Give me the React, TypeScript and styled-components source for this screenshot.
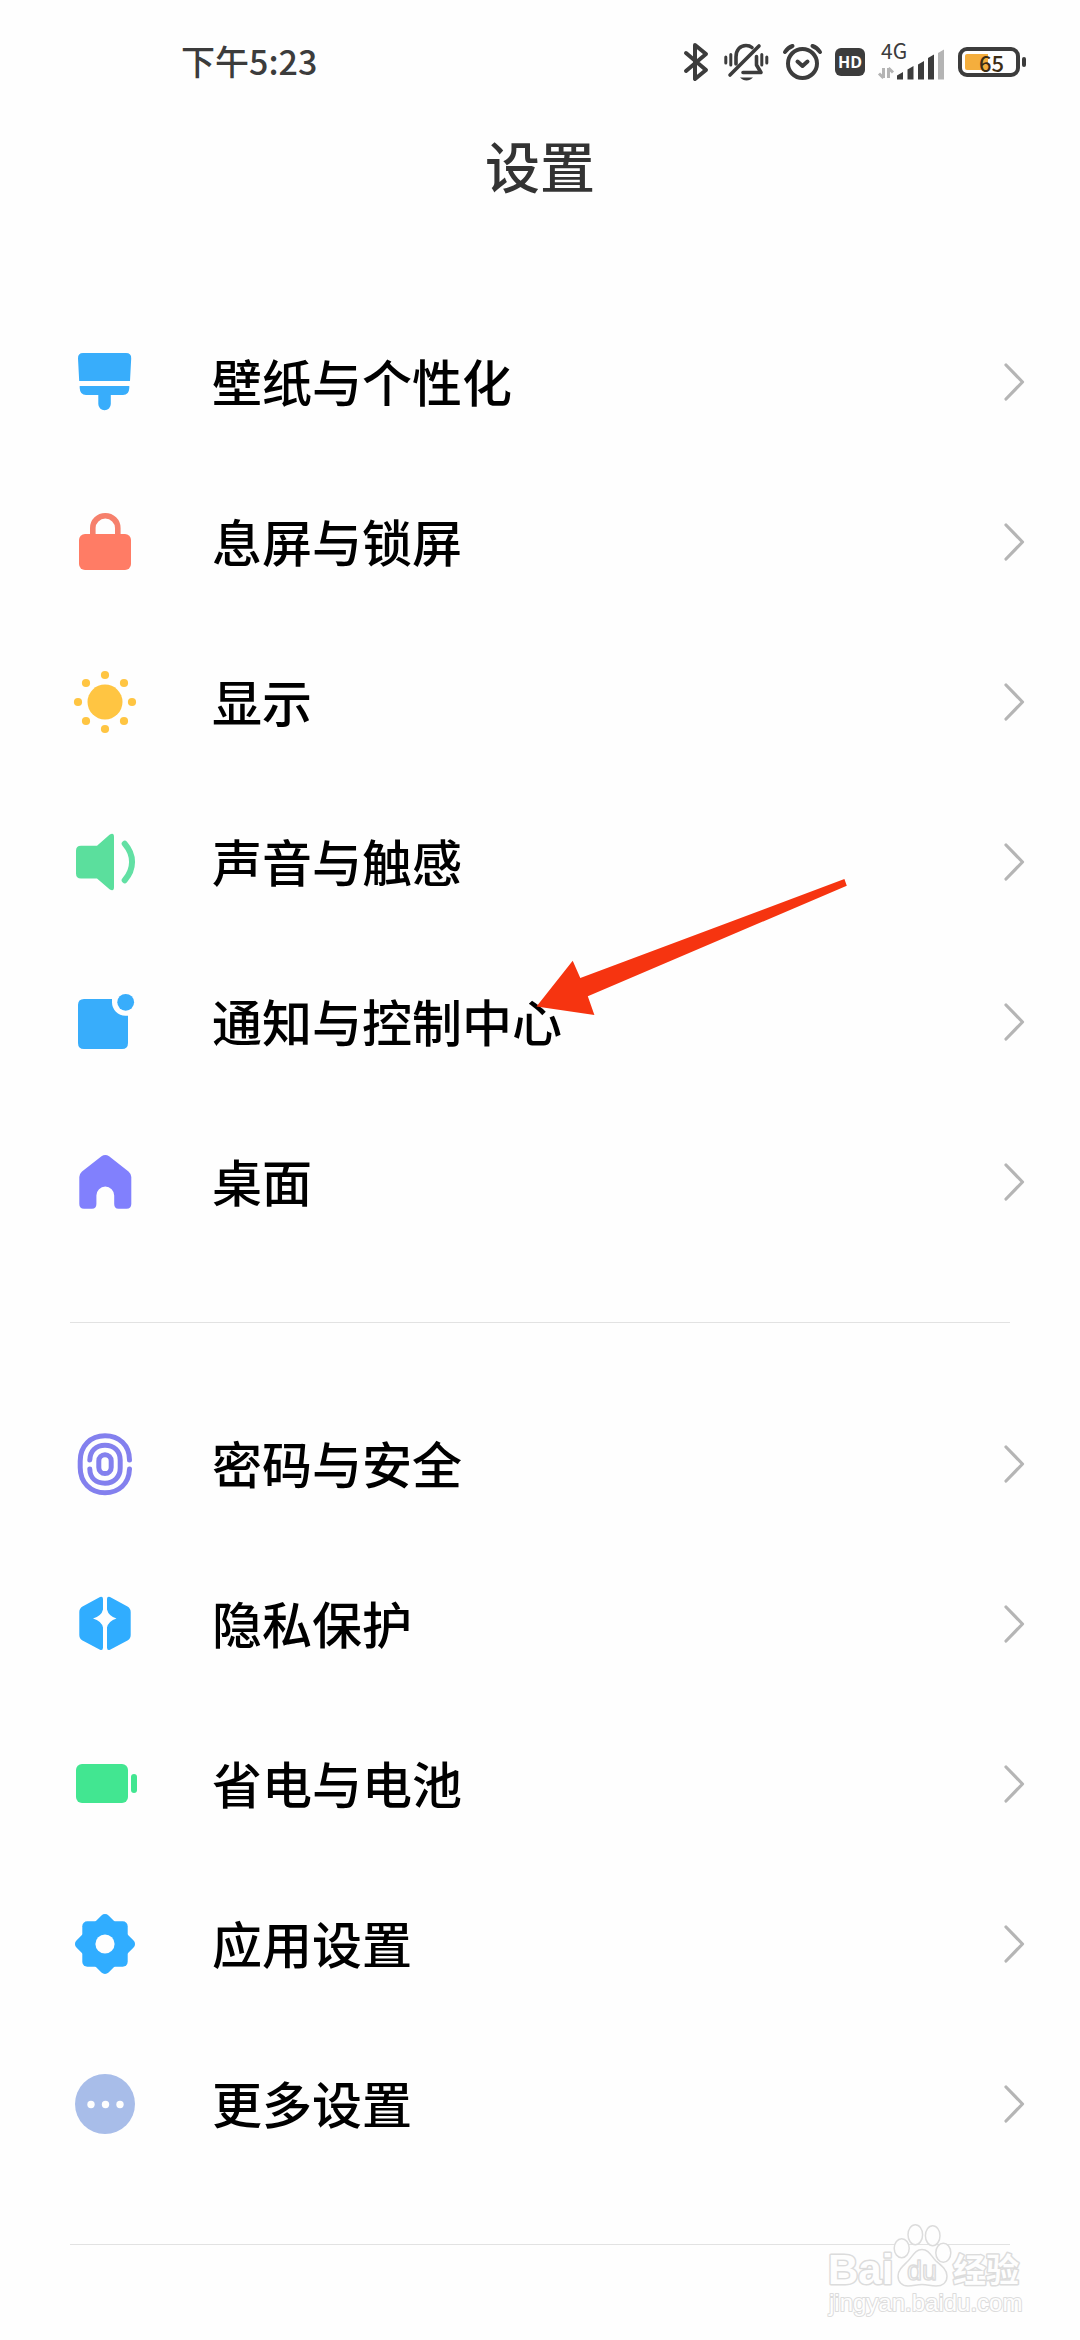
import React from 'react';
import styled, { createGlobalStyle } from 'styled-components';

const GlobalStyle = createGlobalStyle`
  *, *::before, *::after { box-sizing: border-box; }
  body {
    margin: 0;
    background: #fefefe;
    font-family: "Noto Sans CJK SC", "Noto Sans", sans-serif;
  }
`;

const Page = styled.div`
  position: relative;
  min-height: 100vh;
  padding-bottom: 95px;
  background: #fefefe;
  overflow: hidden;
`;

const StatusBar = styled.div`
  display: flex;
  align-items: center;
  justify-content: space-between;
  height: 124px;
  padding: 0 54px 0 181px;
  color: #3c3c3c;
`;

const Clock = styled.time`
  padding-bottom: 2px;
  font-size: 34px;
  line-height: 40px;
  font-weight: 500;
`;

const StatusIcons = styled.div`
  display: flex;
  align-items: center;
  gap: 13px;
`;

const Glyph = styled.svg`
  display: block;
  flex: none;
  overflow: visible;
`;

const HdBadge = styled.span`
  display: flex;
  align-items: center;
  justify-content: center;
  width: 30px;
  height: 28px;
  border-radius: 6px;
  background: #3c3c3c;
  color: #fefefe;
  font: 700 16px/28px "Open Sans", "Noto Sans", sans-serif;
`;

const Battery = styled.span`
  display: flex;
  align-items: center;
  gap: 2px;
`;

const BatteryCell = styled.span<{ $level: number }>`
  display: flex;
  align-items: center;
  justify-content: flex-end;
  width: 62px;
  height: 30px;
  padding: 3px;
  padding-right: 12px;
  border: 4px solid #3c3c3c;
  border-radius: 9px;
  background: linear-gradient(#f4ae3d, #f4ae3d) content-box no-repeat;
  background-size: ${(p) => p.$level}% 100%;
  font: 500 22px/14px "Noto Sans CJK SC", sans-serif;
  color: #3c2c14;
`;

const BatteryTip = styled.span`
  width: 4px;
  height: 10px;
  border-radius: 2px;
  background: #3c3c3c;
`;

const Title = styled.h1`
  margin: 0;
  text-align: center;
  font-size: 55px;
  line-height: 80px;
  font-weight: 500;
  color: #333;
`;

const Main = styled.main`
  padding-top: 37px;
`;

const Section = styled.ul`
  position: relative;
  list-style: none;
  margin: 0;
  padding: 61px 0 60px;
`;

const Divider = styled.hr`
  height: 1px;
  margin: 0 70px;
  border: 0;
  background: #e2e2e2;
`;

const Item = styled.li`
  position: relative;
`;

const Row = styled.a`
  display: flex;
  align-items: center;
  gap: 72px;
  height: 160px;
  padding: 0 56px 0 70px;
  color: #000;
  text-decoration: none;
`;

const Label = styled.span`
  flex: 1;
  padding-bottom: 4px;
  font-size: 50px;
  line-height: 72px;
  font-weight: 500;
`;

const Pointer = styled.svg`
  position: absolute;
  left: 536px;
  top: -64px;
  overflow: visible;
  pointer-events: none;
`;

const Watermark = styled.svg`
  position: absolute;
  right: 56px;
  bottom: 20px;
  overflow: visible;
  pointer-events: none;
`;

const Bluetooth = () => (
  <Glyph width="27" height="38" viewBox="0 0 27 38" fill="none" stroke="#3c3c3c" strokeWidth="4" strokeLinecap="round" strokeLinejoin="round">
    <path d="M2 10 L22 27 L11 36 V2 L22 11 L2 28" />
  </Glyph>
);

const MutedBell = () => (
  <Glyph width="46" height="38" viewBox="0 0 46 38" fill="none" stroke="#3c3c3c" strokeWidth="3.6" strokeLinecap="round" strokeLinejoin="round">
    <path d="M35 3 L6 32" />
    <path d="M12 21 V14 C12 7 16 2.500 22 2.500 C24.500 2.500 26.500 3.200 28 4.500" />
    <path d="M32.500 13.500 V22 L37 29.500 H19" />
    <path d="M16 34.500 H29 C27 36.500 25 37.500 22.500 37.500 C20 37.500 18 36.500 16 34.500 Z" fill="#3c3c3c" stroke="none" />
    <path d="M1.800 14 V20 M6.800 11.500 V22 M37.800 11.500 V22 M42.800 14 V20" strokeWidth="3" />
  </Glyph>
);

const Alarm = () => (
  <Glyph width="39" height="36" viewBox="0 0 39 36" fill="none" stroke="#3c3c3c" strokeWidth="4" strokeLinecap="round" strokeLinejoin="round">
    <circle cx="19.500" cy="19.500" r="14.500" />
    <path d="M2 8 C4 5 6.500 3 9.500 2 M37 8 C35 5 32.500 3 29.500 2" />
    <path d="M14.500 17.500 L19.500 22 L24.500 17.500" />
  </Glyph>
);

const Signal = () => (
  <Glyph width="67" height="36" viewBox="0 0 67 36" role="img" aria-label="4G">
    <text x="3" y="15" fontFamily="'Noto Sans CJK SC', sans-serif" fontSize="21" fontWeight="400" fill="#3c3c3c">4G</text>
    <path d="M5.500 24 V34 M5.500 34 L1 29.500 M10.500 34 V24 M10.500 24 L15 28.500" fill="none" stroke="#b4b4b4" strokeWidth="3" />
    <g fill="#3c3c3c">
      <path d="M19 35.500 V31.500 L25 28 V35.500 Z" />
      <path d="M29.500 35.500 V25.500 L35.500 22 V35.500 Z" />
      <path d="M40 35.500 V20.500 L46 17 V35.500 Z" />
      <path d="M50 35.500 V14 L56 10.500 V35.500 Z" />
    </g>
    <path d="M60 35.500 V9 L66 5.500 V35.500 Z" fill="#b4b4b4" />
  </Glyph>
);

const ItemIcon = ({ children }: { children: React.ReactNode }) => (
  <Glyph width="70" height="70" viewBox="0 0 70 70" aria-hidden="true">{children}</Glyph>
);

const Chevron = () => (
  <Glyph width="20" height="38" viewBox="0 0 20 38" fill="none" stroke="#b5b5b5" strokeWidth="3.2" strokeLinecap="round" strokeLinejoin="round" aria-hidden="true">
    <path d="M2 2 L18.500 19 L2 36" />
  </Glyph>
);

const icons = {
  brush: (
    <ItemIcon>
      <g fill="#38adfb">
        <path d="M13 6 H56 Q61.500 6 61.200 11.500 L60 34 H9.200 L8 11.500 Q7.800 6 13 6 Z" />
        <path d="M9.700 39 H59.300 V41 Q59 48 53 48 H40.800 V57 A6.200 6.200 0 0 1 28.300 57 V48 H16 Q10 48 9.700 41 Z" />
      </g>
    </ItemIcon>
  ),
  lock: (
    <ItemIcon>
      <path d="M22.800 30 V21 A12.500 12.200 0 0 1 47.800 21 V30" fill="none" stroke="#f6806c" strokeWidth="5.6" />
      <rect x="9" y="27" width="52" height="36" rx="6" fill="#ff7c65" />
    </ItemIcon>
  ),
  sun: (
    <ItemIcon>
      <g fill="#ffc542">
        <circle cx="35" cy="35" r="17.500" />
        {[[35, 8], [54, 16], [62, 35], [54, 54], [35, 62], [16, 54], [8, 35], [16, 16]].map(([x, y]) => (
          <circle key={`${x}-${y}`} cx={x} cy={y} r="4.100" />
        ))}
      </g>
    </ItemIcon>
  ),
  sound: (
    <ItemIcon>
      <path d="M11 18.700 H27 L39.500 7.800 Q44 5 44 10 V60 Q44 65 39.500 62.200 L27 51.500 H11 Q6 51.500 6 46.500 V23.700 Q6 18.700 11 18.700 Z" fill="#5bdf9d" />
      <path d="M54.700 16.800 C64.500 28 64.500 42 54.700 53.200" fill="none" stroke="#62e0a4" strokeWidth="6" strokeLinecap="round" />
    </ItemIcon>
  ),
  notification: (
    <ItemIcon>
      <path d="M14 12 H42 V15 A13.500 13.500 0 0 0 55.500 28.700 H58 V56 Q58 62 52 62 H14 Q8 62 8 56 V18 Q8 12 14 12 Z" fill="#38adfb" />
      <circle cx="55.700" cy="15.300" r="8.400" fill="#38adfb" />
    </ItemIcon>
  ),
  home: (
    <ItemIcon>
      <path d="M31.500 9.300 Q35.300 6.500 39.100 9.300 L58.500 24.500 Q61.300 27 61.300 30 V57 Q61.300 61.700 56.500 61.700 H48.500 Q44.200 61.700 44.200 57 V48.500 A8.900 8.900 0 0 0 26.400 48.500 V57 Q26.400 61.700 22 61.700 H14 Q9.300 61.700 9.300 57 V30 Q9.300 27 12 24.500 Z" fill="#8180fd" />
    </ItemIcon>
  ),
  fingerprint: (
    <ItemIcon>
      <g fill="none" stroke="#8380ee" strokeWidth="5" strokeLinecap="round">
        <path d="M59.500 31 C59.500 16 49 6.800 35 6.800 C20.500 6.800 10.200 17 10.200 32 V38.500 C10.200 53.500 20.500 63.800 35 63.800 C48.500 63.800 59 55 59.500 40" />
        <path d="M19.800 31 C20 22 26 16.200 35 16.200 C44 16.200 50.200 22 50.200 31 V39 C50.200 48 44 54.200 35 54.200 C26 54.200 20 49 19.800 40" />
        <rect x="28.800" y="25.800" width="12.400" height="18.800" rx="6.200" />
      </g>
    </ItemIcon>
  ),
  privacy: (
    <ItemIcon>
      <g fill="#30adff">
        <path d="M33 10 Q33 7 30 8 L12.500 17.500 Q9.300 19.500 9.300 23 V46 Q9.300 49.500 12.500 51.500 L30 60.800 Q33 62 33 58.500 V38.500 Q31.500 32 23 29.500 Q31.500 27 33 20.500 Z" />
        <path d="M37 10 Q37 7 40 8 L57.500 17.500 Q60.700 19.500 60.700 23 V46 Q60.700 49.500 57.500 51.500 L40 60.800 Q37 62 37 58.500 V38.500 Q38.500 32 46.500 29.500 Q38.500 27 37 20.500 Z" />
      </g>
    </ItemIcon>
  ),
  battery: (
    <ItemIcon>
      <rect x="6" y="15" width="52" height="39" rx="6" fill="#42e691" />
      <rect x="61" y="25" width="6" height="19" rx="3" fill="#42e691" />
    </ItemIcon>
  ),
  gear: (
    <ItemIcon>
      <g fill="#30adff">
        <rect x="12.300" y="12.300" width="45.400" height="45.400" rx="5" />
        <rect x="12.300" y="12.300" width="45.400" height="45.400" rx="5" transform="rotate(45 35 35)" />
      </g>
      <circle cx="35" cy="35" r="9.600" fill="#fefefe" />
    </ItemIcon>
  ),
  more: (
    <ItemIcon>
      <circle cx="35" cy="35" r="30" fill="#a8bde9" />
      <g fill="#fefefe">
        <circle cx="21" cy="35.500" r="3.700" />
        <circle cx="35.500" cy="35.500" r="3.700" />
        <circle cx="50" cy="35.500" r="3.700" />
      </g>
    </ItemIcon>
  ),
};

type Entry = { icon: keyof typeof icons; label: string; pointed?: boolean };

const groups: Entry[][] = [
  [
    { icon: 'brush', label: '壁纸与个性化' },
    { icon: 'lock', label: '息屏与锁屏' },
    { icon: 'sun', label: '显示' },
    { icon: 'sound', label: '声音与触感' },
    { icon: 'notification', label: '通知与控制中心', pointed: true },
    { icon: 'home', label: '桌面' },
  ],
  [
    { icon: 'fingerprint', label: '密码与安全' },
    { icon: 'privacy', label: '隐私保护' },
    { icon: 'battery', label: '省电与电池' },
    { icon: 'gear', label: '应用设置' },
    { icon: 'more', label: '更多设置' },
  ],
];

const PointerArrow = () => (
  <Pointer width="311" height="138" viewBox="0 0 311 138" aria-hidden="true">
    <path d="M0.500 128.500 L36.700 82.700 L44.300 100 L308.400 1 L310.800 7.700 L51.800 118.300 L58.400 137 Z" fill="#f63410" />
  </Pointer>
);

const BaiduMark = () => (
  <Watermark width="196" height="96" viewBox="828 2224 196 96" fill="#fefefe" stroke="#dcdcdc" strokeWidth="1.500" strokeLinejoin="round">
    <g fontFamily="'Liberation Sans', 'Noto Sans CJK SC', sans-serif" paintOrder="stroke" strokeWidth="3">
      <text x="828" y="2284" fontSize="42" fontWeight="700">Bai</text>
      <text x="953" y="2282" fontSize="33" fontWeight="700" fontFamily="'Noto Sans CJK SC', sans-serif">经验</text>
      <text x="829" y="2311" fontSize="24" strokeWidth="2">jingyan.baidu.com</text>
    </g>
    <ellipse cx="901.700" cy="2248.300" rx="7.500" ry="9.500" />
    <ellipse cx="915.300" cy="2234.700" rx="7.300" ry="10" />
    <ellipse cx="932.700" cy="2235.700" rx="7.300" ry="10" />
    <ellipse cx="943.300" cy="2252.700" rx="7.500" ry="9.500" />
    <path d="M922 2249.500 C929 2249.500 931 2256 936 2261 C942 2266 947 2270 947 2276 C947 2283 942 2286 936 2286 C930 2286 928 2284.500 922 2284.500 C916 2284.500 914 2286 908 2286 C902 2286 898 2282 898 2276 C898 2270 903 2266 908 2261 C913 2256 915 2249.500 922 2249.500 Z" />
    <text x="907" y="2280" fontSize="27" fontFamily="'Liberation Sans', sans-serif" fontWeight="400">du</text>
  </Watermark>
);

export default function App() {
  return (
    <>
      <GlobalStyle />
      <Page>
        <StatusBar>
          <Clock>下午5:23</Clock>
          <StatusIcons>
            <Bluetooth />
            <MutedBell />
            <Alarm />
            <HdBadge>HD</HdBadge>
            <Signal />
            <Battery>
              <BatteryCell $level={60}>65</BatteryCell>
              <BatteryTip />
            </Battery>
          </StatusIcons>
        </StatusBar>
        <Title>设置</Title>
        <Main>
          {groups.map((group, index) => (
            <React.Fragment key={index}>
              <Section>
                {group.map((entry) => (
                  <Item key={entry.label}>
                    <Row href="#">
                      {icons[entry.icon]}
                      <Label>{entry.label}</Label>
                      <Chevron />
                    </Row>
                    {entry.pointed && <PointerArrow />}
                  </Item>
                ))}
              </Section>
              <Divider />
            </React.Fragment>
          ))}
        </Main>
        <BaiduMark />
      </Page>
    </>
  );
}
